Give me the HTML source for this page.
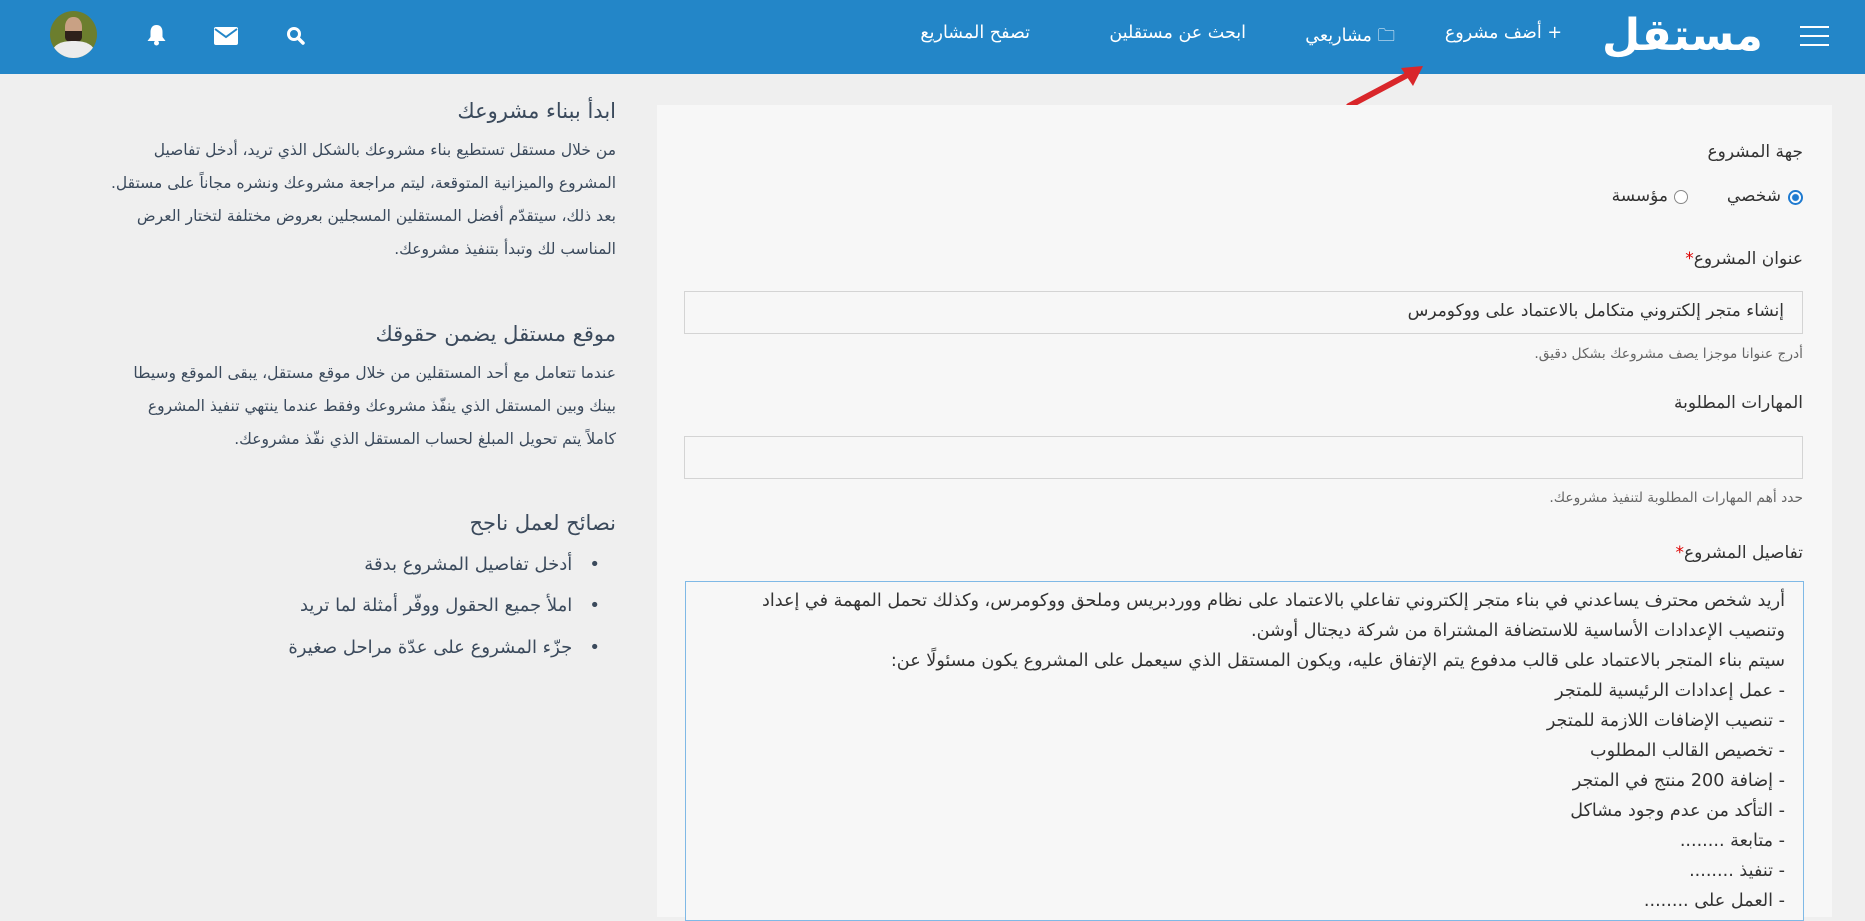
<!DOCTYPE html>
<html dir="rtl"><head><meta charset="utf-8">
<style>
*{margin:0;padding:0;box-sizing:border-box}
body{width:1865px;height:917px;overflow:hidden;background:#efefef;font-family:"DejaVu Sans",sans-serif;position:relative}
.hdr{position:absolute;left:0;top:0;width:1865px;height:74px;background:#2386c8}
.a{position:absolute;white-space:nowrap}
.nav{color:#fff;font-size:17.5px;top:23px}
.panel{position:absolute;left:657px;top:105px;width:1175px;height:812px;background:#f7f7f7}
.lbl{color:#333;font-size:17px;right:62px}
.inp{position:absolute;left:684px;width:1119px;height:43px;border:1px solid #d4d4d4;background:#f7f7f7}
.help{color:#666;font-size:13.8px;right:62px}
.left{color:#3b4a5c;font-size:15.5px;right:1249px;text-align:right}
.ta{position:absolute;left:685px;top:581px;width:1119px;height:340px;border:1px solid #7fb9e6;background:#f7f7f7}
.tl{position:absolute;right:18px;white-space:nowrap;color:#333;font-size:17.6px}
</style></head><body>
<div class="hdr">
 <div class="a" style="left:1800px;top:26px;width:29px;height:2px;background:#fff"></div>
 <div class="a" style="left:1800px;top:35px;width:29px;height:2px;background:#fff"></div>
 <div class="a" style="left:1800px;top:44px;width:29px;height:2px;background:#fff"></div>
 <div class="a" style="left:1602px;top:6px;font-size:44px;font-weight:bold;color:#fff;line-height:60px">مستقل</div>
 <div class="a nav" style="right:303px">+ أضف مشروع</div>
 <div class="a nav" style="right:470px">🗀 مشاريعي</div>
 <div class="a nav" style="right:619px">ابحث عن مستقلين</div>
 <div class="a nav" style="right:835px">تصفح المشاريع</div>
 <svg class="a" style="left:286px;top:26px" width="20" height="20" viewBox="0 0 20 20"><circle cx="8" cy="8" r="5.5" fill="none" stroke="#fff" stroke-width="3"/><path d="M12 12l5 5" stroke="#fff" stroke-width="3.5" stroke-linecap="round"/></svg>
 <svg class="a" style="left:214px;top:27px" width="24" height="18" viewBox="0 0 24 18"><rect x="0" y="0" width="24" height="18" rx="2" fill="#fff"/><path d="M1 2l11 8 11-8" fill="none" stroke="#2386c8" stroke-width="2"/></svg>
 <svg class="a" style="left:146px;top:24px" width="21" height="22" viewBox="0 0 21 22"><path d="M10.5 1c-4 0-6 3-6 7v5l-3 4h18l-3-4V8c0-4-2-7-6-7z" fill="#fff"/><circle cx="10.5" cy="19" r="2.5" fill="#fff"/></svg>
 <div class="a" style="left:50px;top:11px;width:47px;height:47px;border-radius:50%;background:#6c7e2e;overflow:hidden">
  <div style="position:absolute;left:15px;top:6px;width:17px;height:22px;border-radius:45%;background:#c9a184"></div>
  <div style="position:absolute;left:15px;top:20px;width:17px;height:12px;border-radius:0 0 50% 50%;background:#2e211a"></div>
  <div style="position:absolute;left:3px;top:30px;width:41px;height:22px;border-radius:45% 45% 0 0;background:#ececec"></div>
 </div>
</div>
<svg class="a" style="left:1345px;top:60px" width="85" height="52" viewBox="0 0 85 52"><path d="M4 46L68 12" stroke="#d9262a" stroke-width="6" stroke-linecap="round"/><path d="M78 6L56 8l12 18z" fill="#d9262a"/></svg>
<div class="panel"></div>
<div class="a lbl" style="top:142px">جهة المشروع</div>
<div class="a" style="right:62px;top:190px;width:15px;height:15px;border-radius:50%;border:2px solid #1e7ad0;background:radial-gradient(#1e7ad0 0 3px,#fff 4px)"></div>
<div class="a lbl" style="right:84px;top:186px">شخصي</div>
<div class="a" style="right:177px;top:190px;width:14px;height:14px;border-radius:50%;border:1px solid #888;background:#fff"></div>
<div class="a lbl" style="right:197px;top:186px">مؤسسة</div>
<div class="a lbl" style="top:249px">عنوان المشروع<span style="color:#d00">*</span></div>
<div class="a lbl" style="top:393px">المهارات المطلوبة</div>
<div class="a help" style="top:346px">أدرج عنوانا موجزا يصف مشروعك بشكل دقيق.</div>
<div class="a help" style="top:490px">حدد أهم المهارات المطلوبة لتنفيذ مشروعك.</div>
<div class="a lbl" style="top:543px">تفاصيل المشروع<span style="color:#d00">*</span></div>
<div class="inp" style="top:291px"><div class="tl" style="top:9px;font-size:17px">إنشاء متجر إلكتروني متكامل بالاعتماد على ووكومرس</div></div>
<div class="inp" style="top:436px"></div>
<div class="ta">
 <div class="tl" style="top:9px">أريد شخص محترف يساعدني في بناء متجر إلكتروني تفاعلي بالاعتماد على نظام ووردبريس وملحق ووكومرس، وكذلك تحمل المهمة في إعداد</div>
 <div class="tl" style="top:39px">وتنصيب الإعدادات الأساسية للاستضافة المشتراة من شركة ديجتال أوشن.</div>
 <div class="tl" style="top:69px">سيتم بناء المتجر بالاعتماد على قالب مدفوع يتم الإتفاق عليه، ويكون المستقل الذي سيعمل على المشروع يكون مسئولًا عن:</div>
 <div class="tl" style="top:99px">- عمل إعدادات الرئيسية للمتجر</div>
 <div class="tl" style="top:129px">- تنصيب الإضافات اللازمة للمتجر</div>
 <div class="tl" style="top:159px">- تخصيص القالب المطلوب</div>
 <div class="tl" style="top:189px">- إضافة 200 منتج في المتجر</div>
 <div class="tl" style="top:219px">- التأكد من عدم وجود مشاكل</div>
 <div class="tl" style="top:249px">- متابعة ........</div>
 <div class="tl" style="top:279px">- تنفيذ ........</div>
 <div class="tl" style="top:309px">- العمل على ........</div>
</div>
<div class="a left" style="top:99px;font-size:21px">ابدأ ببناء مشروعك</div>
<div class="a left" style="top:134px;line-height:33px">من خلال مستقل تستطيع بناء مشروعك بالشكل الذي تريد، أدخل تفاصيل<br>المشروع والميزانية المتوقعة، ليتم مراجعة مشروعك ونشره مجاناً على مستقل.<br>بعد ذلك، سيتقدّم أفضل المستقلين المسجلين بعروض مختلفة لتختار العرض<br>المناسب لك وتبدأ بتنفيذ مشروعك.</div>
<div class="a left" style="top:322px;font-size:21px">موقع مستقل يضمن حقوقك</div>
<div class="a left" style="top:357px;line-height:33px">عندما تتعامل مع أحد المستقلين من خلال موقع مستقل، يبقى الموقع وسيطا<br>بينك وبين المستقل الذي ينفّذ مشروعك وفقط عندما ينتهي تنفيذ المشروع<br>كاملاً يتم تحويل المبلغ لحساب المستقل الذي نفّذ مشروعك.</div>
<div class="a left" style="top:511px;font-size:21px">نصائح لعمل ناجح</div>
<div class="a left" style="top:554px;right:1265px;font-size:18px">•&nbsp;&nbsp; أدخل تفاصيل المشروع بدقة</div>
<div class="a left" style="top:595px;right:1265px;font-size:18px">•&nbsp;&nbsp; املأ جميع الحقول ووفّر أمثلة لما تريد</div>
<div class="a left" style="top:637px;right:1265px;font-size:18px">•&nbsp;&nbsp; جزّء المشروع على عدّة مراحل صغيرة</div>
</body></html>
